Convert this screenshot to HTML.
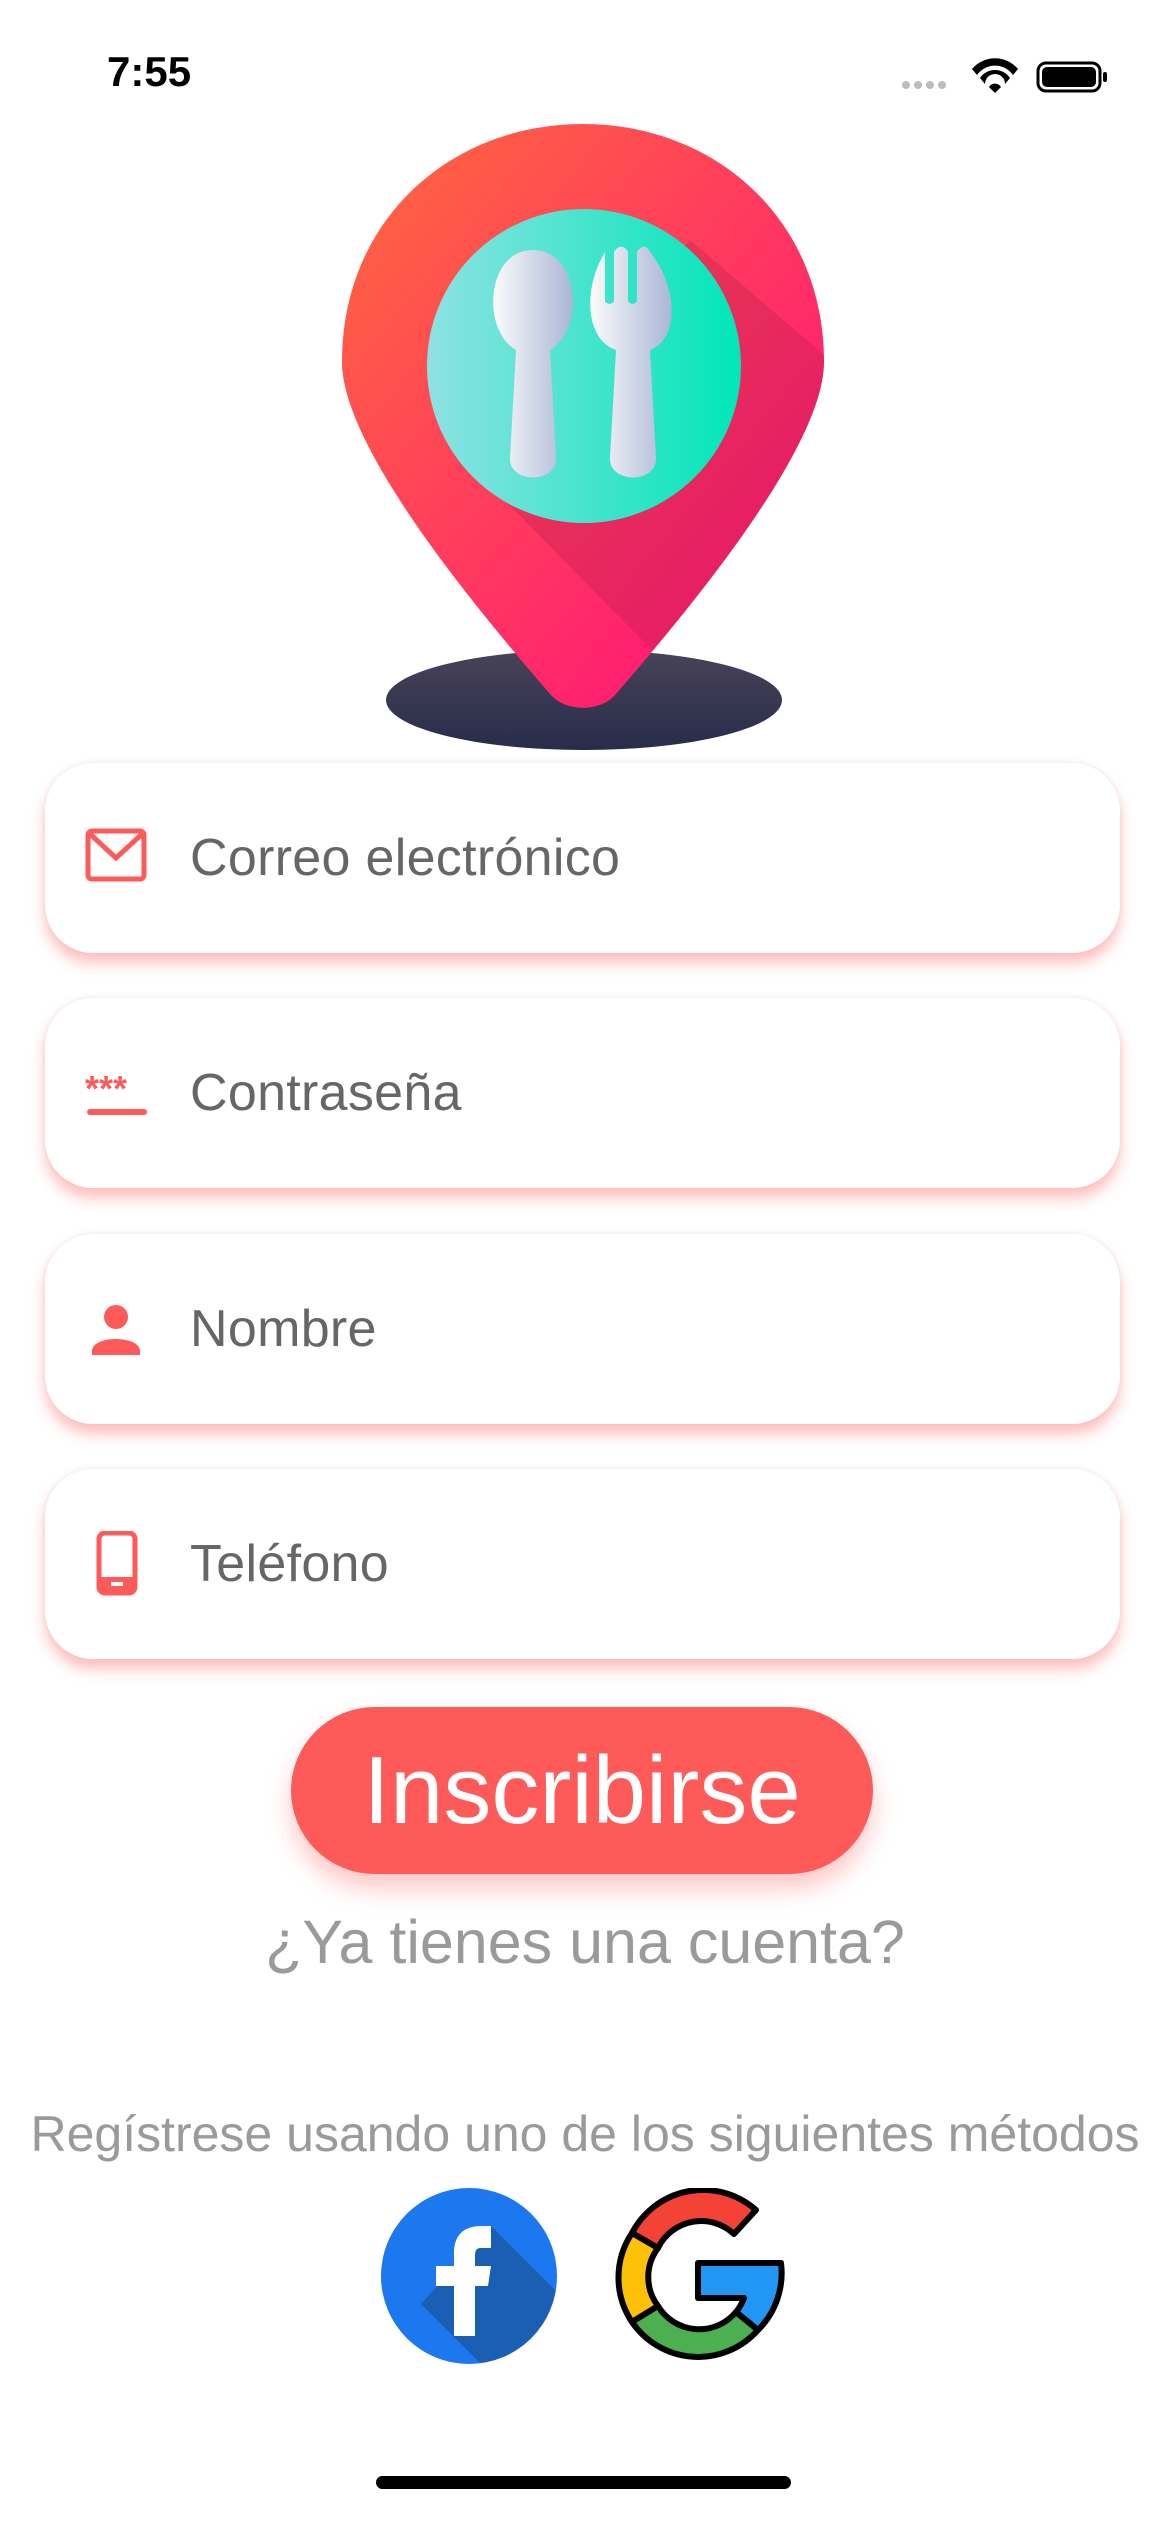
<!DOCTYPE html>
<html><head><meta charset="utf-8"><style>
html,body{margin:0;padding:0;background:#fff;width:1170px;height:2532px;overflow:hidden;position:relative;font-family:"Liberation Sans",sans-serif}
.abs{position:absolute}
.card{position:absolute;left:45px;width:1075px;height:190px;background:#fff;border-radius:48px;box-shadow:0 10px 14px rgba(255,110,110,0.45),0 -1px 6px rgba(0,0,0,0.06)}
.card span{position:absolute;left:145px;top:0;line-height:190px;font-size:52px;color:#666;letter-spacing:0.3px}
.card svg{position:absolute;left:40px;top:65px}
</style></head><body>
<div class="abs" style="left:107px;top:48px;font-size:42px;font-weight:bold;color:#000">7:55</div>
<svg class="abs" style="left:900px;top:55px" width="215" height="40" viewBox="0 0 215 40">
<g fill="#bbb"><circle cx="6" cy="30" r="4"/><circle cx="18" cy="30" r="4"/><circle cx="30" cy="30" r="4"/><circle cx="42" cy="30" r="4"/></g>
<path d="M72 14 A30 30 0 0 1 118 14 L113 20 A22 22 0 0 0 77 20Z M80 23 A18 18 0 0 1 110 23 L105 29 A10 10 0 0 0 85 29Z M89 32 L95 38 L101 32 A7 7 0 0 0 89 32Z" fill="#000"/>
<rect x="138" y="8" width="62" height="28" rx="8" fill="none" stroke="#000" stroke-width="3"/>
<rect x="142" y="12" width="54" height="20" rx="5" fill="#000"/>
<rect x="203" y="17" width="4" height="10" rx="2" fill="#000"/>
</svg>
<svg class="abs" style="left:0;top:0" width="1170" height="760" viewBox="0 0 1170 760">
<defs>
<linearGradient id="pg" x1="0" y1="0" x2="1" y2="1"><stop offset="0" stop-color="#ff6a3d"/><stop offset="1" stop-color="#ff0a7f"/></linearGradient>
<linearGradient id="cg" x1="0" y1="0" x2="1" y2="0"><stop offset="0" stop-color="#8ee2e2"/><stop offset="1" stop-color="#00e6b8"/></linearGradient>
<linearGradient id="ug" x1="0" y1="0" x2="1" y2="0"><stop offset="0" stop-color="#fbfbfb"/><stop offset="1" stop-color="#aab6d6"/></linearGradient>
<linearGradient id="sg" x1="0" y1="0" x2="0" y2="1"><stop offset="0" stop-color="#484358"/><stop offset="1" stop-color="#282c4a"/></linearGradient>
<clipPath id="pc"><path d="M583 124 C716 124 824 220 824 362 C824 450 680 620 615 695 C600 712 566 712 551 695 C486 620 342 450 342 362 C342 220 450 124 583 124Z"/></clipPath>
</defs>
<ellipse cx="584" cy="700" rx="198" ry="50" fill="url(#sg)"/>
<path d="M583 124 C716 124 824 220 824 362 C824 450 680 620 615 695 C600 712 566 712 551 695 C486 620 342 450 342 362 C342 220 450 124 583 124Z" fill="url(#pg)"/>
<path d="M690 240 L900 420 L900 760 L760 760 L480 475 Z" fill="#a01a45" opacity="0.25" clip-path="url(#pc)"/>
<circle cx="584" cy="366" r="157" fill="url(#cg)"/>
<path d="M533 250 C580 250 585 330 550 350 L556 458 C557 484 509 484 510 458 L516 350 C481 330 486 250 533 250Z" fill="url(#ug)"/>
<path d="M605 252 L605 300 C605 305 614 305 614 300 L614 252 C618 245 625 245 628 252 L628 300 C628 305 637 305 637 300 L637 252 C641 245 647 245 650 252 C680 290 678 340 650 350 L656 458 C657 484 609 484 610 458 L616 350 C586 340 582 290 605 252Z" fill="url(#ug)"/>
</svg>
<div class="card" style="top:763px"><svg width="62" height="54" viewBox="0 0 62 54"><rect x="3" y="3" width="56" height="48" rx="4" fill="none" stroke="#ff5a5a" stroke-width="5"/><path d="M5 6 L31 30 L57 6" fill="none" stroke="#ff5a5a" stroke-width="5"/></svg><span>Correo electrónico</span></div>
<div class="card" style="top:998px"><svg width="66" height="60" viewBox="0 0 66 60"><text x="0" y="38" font-size="36" font-weight="bold" fill="#ff5a5a" font-family="Liberation Sans">***</text><rect x="2" y="46" width="60" height="6" rx="3" fill="#ff5a5a"/></svg><span>Contraseña</span></div>
<div class="card" style="top:1234px"><svg width="62" height="60" viewBox="0 0 62 60"><circle cx="31" cy="18" r="12" fill="#ff5a5a"/><path d="M7 52 C7 36 55 36 55 52 L55 56 L7 56Z" fill="#ff5a5a"/></svg><span>Nombre</span></div>
<div class="card" style="top:1469px"><svg width="62" height="66" viewBox="0 0 62 66" style="top:62px"><rect x="14" y="2" width="36" height="60" rx="6" fill="none" stroke="#ff5a5a" stroke-width="5"/><rect x="16" y="46" width="32" height="14" fill="#ff5a5a"/><rect x="26" y="51" width="12" height="4" fill="#fff"/></svg><span>Teléfono</span></div>
<div class="abs" style="left:291px;top:1707px;width:582px;height:167px;border-radius:84px;background:#ff5a5a;box-shadow:0 14px 24px rgba(255,90,90,0.35);color:#fff;font-size:96px;text-align:center;line-height:167px">Inscribirse</div>
<div class="abs" style="left:0;width:1170px;top:1907px;text-align:center;font-size:61px;color:#9a9a9a;line-height:70px">¿Ya tienes una cuenta?</div>
<div class="abs" style="left:0;width:1170px;top:2105px;text-align:center;font-size:50px;color:#9a9a9a;line-height:58px">Regístrese usando uno de los siguientes métodos</div>
<svg class="abs" style="left:381px;top:2188px" width="176" height="176" viewBox="0 0 176 176">
<defs><clipPath id="fc"><circle cx="88" cy="88" r="88"/></clipPath></defs>
<circle cx="88" cy="88" r="88" fill="#1b78ee"/>
<path d="M110 38 L176 104 L176 176 L100 176 L40 116 Z" fill="#1c4f8f" opacity="0.6" clip-path="url(#fc)"/>
<path d="M73 148 L73 98 L55 98 L55 78 L73 78 L73 65 C73 47 83 38 100 38 L110 38 L110 60 L100 60 C94 60 94 64 94 70 L94 78 L110 78 L107 98 L94 98 L94 148Z" fill="#fff"/>
</svg>
<svg class="abs" style="left:606px;top:2188px" width="180" height="180" viewBox="0 0 180 180">
<g stroke="#000" stroke-width="6" stroke-linejoin="round">
<path d="M26 45 A80 80 0 0 1 150 22 L128 46 A48 48 0 0 0 52 60Z" fill="#f44336"/>
<path d="M26 45 L52 60 A48 48 0 0 0 52 118 L26 134 A80 80 0 0 1 26 45Z" fill="#ffc107"/>
<path d="M26 134 L52 118 A48 48 0 0 0 130 124 L152 142 A80 80 0 0 1 26 134Z" fill="#4caf50"/>
<path d="M152 142 L130 124 A48 48 0 0 0 138 110 L92 110 L92 75 L175 75 A80 80 0 0 1 152 142Z" fill="#2196f3"/>
</g></svg>
<div class="abs" style="left:376px;top:2476px;width:415px;height:13px;border-radius:7px;background:#000"></div>
</body></html>
